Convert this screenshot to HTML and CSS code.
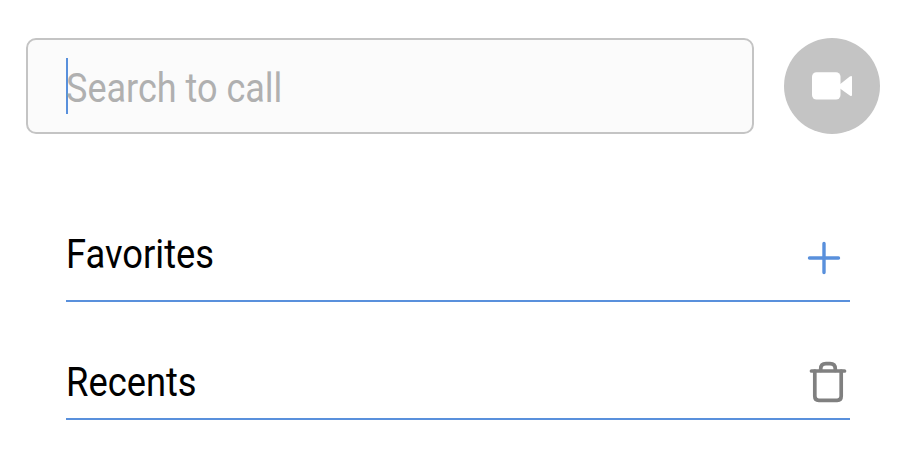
FILE: index.html
```
<!DOCTYPE html>
<html lang="en">
<head>
    <meta charset="UTF-8">
    <meta name="viewport" content="width=device-width, initial-scale=1.0">
    <title>Call</title>
    <link rel="stylesheet" href="styles.css">
</head>
<body>
    <div class="search-row">
        <div class="search-box">
            <span class="caret"></span>
            <span class="placeholder">Search to call</span>
        </div>
        <button class="video-btn" aria-label="Start video call">
            <svg width="96" height="96" viewBox="0 0 96 96">
                <rect x="28" y="34.3" width="28.5" height="27.3" rx="4.5" fill="#fff"/>
                <path d="M56 46.2 L65.8 38.6 Q68 37.2 68 39.2 V56.8 Q68 58.8 65.8 57.4 L56 50.4 Z" fill="#fff"/>
            </svg>
        </button>
    </div>

    <div class="section favorites">
        <h2>Favorites</h2>
        <svg class="icon" width="50" height="48" viewBox="0 0 50 48">
            <path d="M9.5 24 H38.5 M24 9.5 V38.5" fill="none" stroke="#5990dc" stroke-width="3.4" stroke-linecap="round"/>
        </svg>
    </div>

    <div class="section recents">
        <h2>Recents</h2>
        <svg class="icon" width="50" height="48" viewBox="0 0 50 48">
            <g fill="none" stroke="#808080" stroke-width="3.7" stroke-linecap="round" stroke-linejoin="round">
                <path d="M11.5 13 H44.5"/>
                <path d="M14.8 13 V38.3 Q14.8 42.3 18.8 42.3 H37.2 Q41.2 42.3 41.2 38.3 V13"/>
                <path d="M20.7 12.5 V11 Q20.7 5.7 26 5.7 H30 Q35.3 5.7 35.3 11 V12.5"/>
            </g>
        </svg>
    </div>
</body>
</html>
```
FILE: styles.css
```
body {
    font-family: Roboto, 'Liberation Sans', sans-serif;
    margin: 0;
    padding: 38px 36px 0 26px;
    background-color: #fff;
    color: #000;
}

.search-row {
    display: flex;
    gap: 30px;
}

.search-box {
    box-sizing: border-box;
    width: 728px;
    height: 96px;
    padding: 18px 38px;
    display: flex;
    background-color: #fbfbfb;
    border: 2px solid #c4c4c4;
    border-radius: 10px;
}

.caret {
    width: 2px;
    height: 56px;
    margin-right: -2px;
    background-color: #5990dc;
}

.placeholder {
    font-size: 40px;
    line-height: 62px;
    color: #b0b0b0;
    transform: scaleX(0.9);
    transform-origin: left;
}

.video-btn {
    width: 96px;
    height: 96px;
    padding: 0;
    border: none;
    border-radius: 50%;
    background-color: #c4c4c4;
}

.video-btn svg,
.icon {
    display: block;
}

.section {
    box-sizing: border-box;
    width: 784px;
    margin-left: 40px;
    display: flex;
    justify-content: space-between;
    align-items: flex-start;
    border-bottom: 2px solid #5990dc;
}

.section h2 {
    margin: 0;
    font-size: 40px;
    font-weight: 400;
    line-height: 50px;
    transform: scaleX(0.908);
    transform-origin: left;
}

.favorites {
    height: 72px;
    margin-top: 96px;
}

.favorites .icon {
    margin-top: 4px;
}

.recents {
    height: 62px;
    margin-top: 56px;
}
```
